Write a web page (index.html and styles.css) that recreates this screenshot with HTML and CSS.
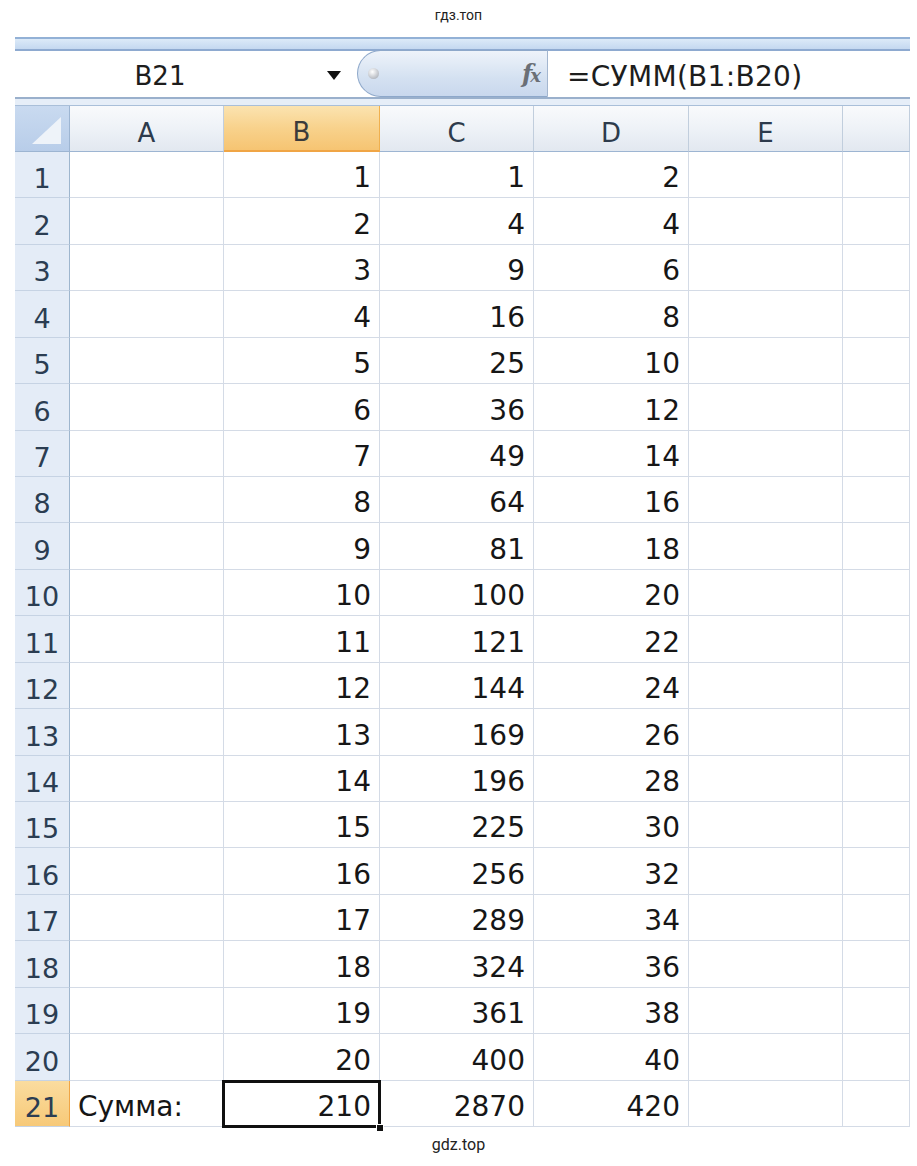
FILE: index.html
```html
<!DOCTYPE html>
<html lang="ru">
<head>
<meta charset="utf-8">
<title>гдз.топ</title>
<link rel="stylesheet" href="styles.css">
</head>
<body>
<div class="wm-top">гдз.топ</div>
<div class="sheet">
  <div class="topband"></div>
  <div class="fbar">
    <div class="namebox"><span class="nb-text">B21</span><span class="nb-arrow"></span></div>
    <div class="pill"><span class="pill-dot"></span><span class="fx">f<span class="fx-x">x</span></span></div>
    <div class="formula">=СУММ(B1:B20)</div>
  </div>
  <div class="sep"></div>
  <div class="grid">
    <div class="corner"><span class="corner-tri"></span></div><div class="ch">A</div><div class="ch ch-sel">B</div><div class="ch">C</div><div class="ch">D</div><div class="ch">E</div><div class="ch"></div>
    <div class="rh">1</div><div class="c"></div><div class="c">1</div><div class="c">1</div><div class="c">2</div><div class="c"></div><div class="c"></div>
    <div class="rh">2</div><div class="c"></div><div class="c">2</div><div class="c">4</div><div class="c">4</div><div class="c"></div><div class="c"></div>
    <div class="rh">3</div><div class="c"></div><div class="c">3</div><div class="c">9</div><div class="c">6</div><div class="c"></div><div class="c"></div>
    <div class="rh">4</div><div class="c"></div><div class="c">4</div><div class="c">16</div><div class="c">8</div><div class="c"></div><div class="c"></div>
    <div class="rh">5</div><div class="c"></div><div class="c">5</div><div class="c">25</div><div class="c">10</div><div class="c"></div><div class="c"></div>
    <div class="rh">6</div><div class="c"></div><div class="c">6</div><div class="c">36</div><div class="c">12</div><div class="c"></div><div class="c"></div>
    <div class="rh">7</div><div class="c"></div><div class="c">7</div><div class="c">49</div><div class="c">14</div><div class="c"></div><div class="c"></div>
    <div class="rh">8</div><div class="c"></div><div class="c">8</div><div class="c">64</div><div class="c">16</div><div class="c"></div><div class="c"></div>
    <div class="rh">9</div><div class="c"></div><div class="c">9</div><div class="c">81</div><div class="c">18</div><div class="c"></div><div class="c"></div>
    <div class="rh">10</div><div class="c"></div><div class="c">10</div><div class="c">100</div><div class="c">20</div><div class="c"></div><div class="c"></div>
    <div class="rh">11</div><div class="c"></div><div class="c">11</div><div class="c">121</div><div class="c">22</div><div class="c"></div><div class="c"></div>
    <div class="rh">12</div><div class="c"></div><div class="c">12</div><div class="c">144</div><div class="c">24</div><div class="c"></div><div class="c"></div>
    <div class="rh">13</div><div class="c"></div><div class="c">13</div><div class="c">169</div><div class="c">26</div><div class="c"></div><div class="c"></div>
    <div class="rh">14</div><div class="c"></div><div class="c">14</div><div class="c">196</div><div class="c">28</div><div class="c"></div><div class="c"></div>
    <div class="rh">15</div><div class="c"></div><div class="c">15</div><div class="c">225</div><div class="c">30</div><div class="c"></div><div class="c"></div>
    <div class="rh">16</div><div class="c"></div><div class="c">16</div><div class="c">256</div><div class="c">32</div><div class="c"></div><div class="c"></div>
    <div class="rh">17</div><div class="c"></div><div class="c">17</div><div class="c">289</div><div class="c">34</div><div class="c"></div><div class="c"></div>
    <div class="rh">18</div><div class="c"></div><div class="c">18</div><div class="c">324</div><div class="c">36</div><div class="c"></div><div class="c"></div>
    <div class="rh">19</div><div class="c"></div><div class="c">19</div><div class="c">361</div><div class="c">38</div><div class="c"></div><div class="c"></div>
    <div class="rh">20</div><div class="c"></div><div class="c">20</div><div class="c">400</div><div class="c">40</div><div class="c"></div><div class="c"></div>
    <div class="rh rh-sel">21</div><div class="c c-left">Сумма:</div><div class="c c-sel">210<span class="handle"></span></div><div class="c">2870</div><div class="c">420</div><div class="c"></div><div class="c"></div>
  </div>
</div>
<div class="wm-bottom">gdz.top</div>
</body>
</html>
```

FILE: styles.css
```css
html, body {
  margin: 0;
  padding: 0;
  background: #ffffff;
}

*, *::before, *::after {
  box-sizing: border-box;
}

body {
  width: 917px;
  height: 1166px;
  overflow: hidden;
  font-family: "DejaVu Sans", "Liberation Sans", sans-serif;
}

.wm-top {
  height: 37px;
  display: flex;
  justify-content: center;
  font-family: Roboto, "Liberation Sans", sans-serif;
  font-size: 14px;
  line-height: 30px;
  color: #222;
}

.wm-bottom {
  text-align: center;
  font-family: Roboto, "Liberation Sans", sans-serif;
  font-size: 16px;
  line-height: 36px;
  color: #222;
}

.sheet {
  margin-left: 15px;
  width: 895px;
}

.topband {
  height: 14px;
  border-top: 2px solid #93b1d6;
  border-bottom: 2px solid #8eaad0;
  background: linear-gradient(#dceaf8, #c4d8f0);
}

.fbar {
  height: 46px;
  display: flex;
  background: #ffffff;
}

.namebox {
  width: 342px;
  display: flex;
  align-items: center;
}

.nb-text {
  width: 290px;
  text-align: center;
  font-size: 26px;
  color: #1d1d1d;
  padding-top: 4px;
}

.nb-arrow {
  width: 0;
  height: 0;
  margin-left: 22px;
  margin-top: 2px;
  border-left: 7px solid transparent;
  border-right: 7px solid transparent;
  border-top: 9px solid #111;
}

.pill {
  width: 191px;
  margin-top: -1px;
  border: 1px solid #8ea8ca;
  border-right: 1px solid #a3b6cf;
  border-radius: 24px 0 0 24px;
  background: linear-gradient(#eef3fa, #d4e1f1 60%, #c9d8ed);
  display: flex;
  align-items: center;
  justify-content: space-between;
  padding: 0 8px 0 10px;
}

.pill-dot {
  width: 11px;
  height: 11px;
  border-radius: 50%;
  background: radial-gradient(circle at 40% 35%, #ffffff, #b9bdc4 70%, #9aa0aa);
}

.fx {
  font-family: "DejaVu Serif", "Liberation Serif", serif;
  font-style: italic;
  font-weight: bold;
  font-size: 24px;
  color: #6a6f76;
  letter-spacing: -2px;
}

.fx-x {
  font-size: 18px;
}

.formula {
  flex: 1;
  display: flex;
  align-items: center;
  padding-left: 19px;
  padding-top: 4px;
  font-size: 28px;
  letter-spacing: 0.3px;
  color: #1d1d1d;
}

.sep {
  height: 9px;
  border-top: 2px solid #9ab0cc;
  border-bottom: 1px solid #a9bfd9;
  background: #e6eef8;
}

.grid {
  display: grid;
  grid-template-columns: 55px 154px 156px 154px 155px 154px 67px;
  grid-template-rows: 46px repeat(21, 1fr);
  height: 1021px;
}

.corner {
  background: linear-gradient(#c9daf0, #b8cde9);
  border-right: 1px solid #9db5d2;
  border-bottom: 1px solid #9db5d2;
  position: relative;
}

.corner-tri {
  position: absolute;
  right: 8px;
  bottom: 7px;
  width: 0;
  height: 0;
  border-left: 29px solid transparent;
  border-bottom: 27px solid #eef3f9;
}

.ch {
  display: flex;
  align-items: center;
  justify-content: center;
  padding-top: 8px;
  font-size: 26px;
  color: #2d3b4c;
  background: linear-gradient(#f9fafc, #eef2f7 50%, #e2e8f0);
  border-right: 1px solid #c1cedd;
  border-bottom: 1px solid #9db5d2;
}

.ch-sel {
  background: linear-gradient(#fbe3b0, #f8d28c 50%, #f6c472);
  border-right: 1px solid #f0b04e;
  border-bottom: 2px solid #f0a545;
  color: #3b3b3b;
}

.rh {
  display: flex;
  align-items: flex-end;
  justify-content: center;
  padding-bottom: 3px;
  font-size: 27px;
  color: #2b3d52;
  background: #e4ecf7;
  border-right: 1px solid #9eb6ce;
  border-bottom: 1px solid #c6d3e4;
}

.rh-sel {
  background: linear-gradient(#fadc9f, #f7c978);
  border-right: 1px solid #f0a545;
}

.c {
  display: flex;
  align-items: flex-end;
  justify-content: flex-end;
  padding: 0 8px 3px 0;
  font-size: 28px;
  color: #161616;
  border-right: 1px solid #d4dbe6;
  border-bottom: 1px solid #d4dbe6;
}

.c-left {
  justify-content: flex-start;
  padding-left: 8px;
}

.c-sel {
  position: relative;
  padding-right: 8px;
}

.c-sel::after {
  content: "";
  position: absolute;
  left: -2px;
  top: -1px;
  right: -2px;
  bottom: -2px;
  border: 3px solid #101010;
}

.handle {
  position: absolute;
  right: -5px;
  bottom: -6px;
  width: 8px;
  height: 8px;
  background: #101010;
  border: 1px solid #ffffff;
  z-index: 2;
}
```
